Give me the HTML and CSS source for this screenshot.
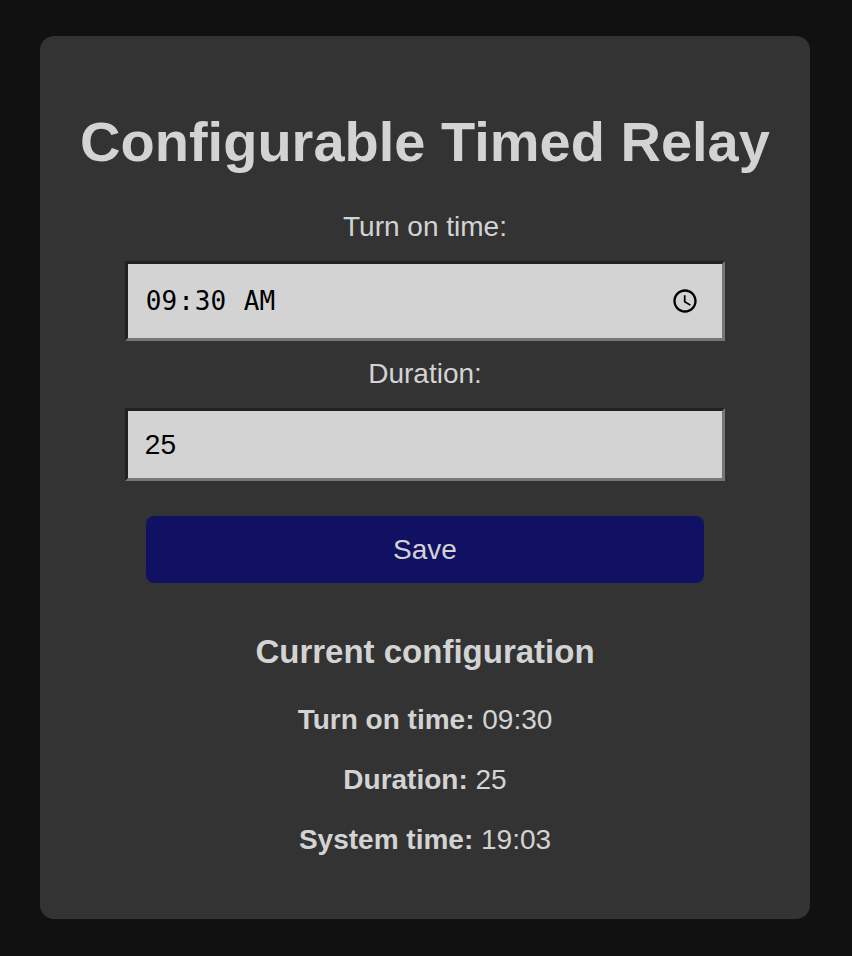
FILE: index.html
```html
<!DOCTYPE html>
<html lang="en">
<head>
<meta charset="utf-8">
<title>Configurable Timed Relay</title>
<link rel="stylesheet" href="styles.css">
</head>
<body>
<main class="card">
  <h1>Configurable Timed Relay</h1>
  <form class="form">
    <label for="time">Turn on time:</label>
    <input class="field field-time" type="time" id="time" value="09:30">
    <label for="duration">Duration:</label>
    <input class="field" type="text" id="duration" value="25">
    <button type="button" class="save">Save</button>
  </form>
  <h2>Current configuration</h2>
  <p><strong>Turn on time:</strong> 09:30</p>
  <p><strong>Duration:</strong> 25</p>
  <p><strong>System time:</strong> 19:03</p>
</main>
</body>
</html>
```
FILE: styles.css
```css
* { box-sizing: border-box; }

html { background: #111; }

body {
  margin: 36px 42px 36px 40px;
  color: #d3d3d3;
  font: 28px/32px "Liberation Sans", Arial, sans-serif;
  text-align: center;
}

.card {
  padding: 73px 40px 63px;
  background: #333;
  border-radius: 14px;
}

h1 {
  margin: 0 0 36px;
  font-size: 56px;
  line-height: 66px;
  white-space: nowrap;
}

.form {
  display: flex;
  flex-direction: column;
  align-items: center;
}

.field {
  width: 87%;
  height: 73px;
  margin: 18px 0;
  padding: 16px 17px;
  border: 3px inset #767676;
  border-radius: 0;
  background: #d3d3d3;
  color: #000;
  font: inherit;
}

.field-time {
  height: 80px;
  margin-bottom: 17px;
  padding-right: 20px;
  font-family: "DejaVu Sans Mono", monospace;
  font-size: 26px;
}

.field-time::-webkit-calendar-picker-indicator {
  width: 28px;
  height: 28px;
}

.save {
  width: 81%;
  height: 67px;
  margin-top: 17px;
  border: 0;
  border-radius: 8px;
  background: #111163;
  color: #d3d3d3;
  font: inherit;
}

h2 {
  margin: 49px 0 32px;
  font-size: 33px;
  line-height: 40px;
}

p { margin: 0 0 28px; }
p:last-child { margin-bottom: 0; }
```
